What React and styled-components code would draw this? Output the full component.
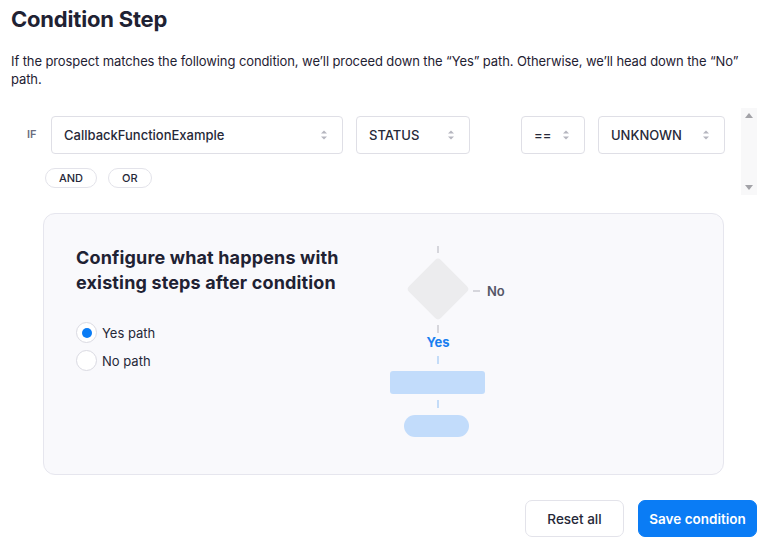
import React from 'react';
import styled, { createGlobalStyle } from 'styled-components'

const GlobalStyle = createGlobalStyle`
  body {
    margin: 0;
    background: white;
    font-family: Inter, 'Noto Sans', sans-serif;
    color: #1f2233;
  }
`

const fields = [
  { label: 'CallbackFunctionExample', width: 292, gapBefore: 0 },
  { label: 'STATUS', width: 114 },
  { label: '==', width: 64, gapBefore: 51 },
  { label: 'UNKNOWN', width: 127 },
]

const Arrows = () => (
  <svg width="8" height="12" viewBox="0 0 8 12">
    <path d="M4 1.5 L7 4.5 H1 Z" fill="#b5b6bf" />
    <path d="M4 10.5 L7 7.5 H1 Z" fill="#b5b6bf" />
  </svg>
)

const PathDiagram = () => (
  <svg width="130" height="200" viewBox="0 0 130 200">
    <g stroke="#d6d6dc" strokeWidth="2">
      <line x1="53" y1="6" x2="53" y2="13" />
      <line x1="53" y1="85" x2="53" y2="93" />
      <line x1="88" y1="51" x2="95" y2="51" />
    </g>
    <rect x="30.5" y="26.5" width="45" height="45" rx="4" fill="#ececee" transform="rotate(45 53 49)" />
    <text x="102" y="56" fontSize="13" fontWeight="600" fill="#555767" fontFamily="Inter, sans-serif">No</text>
    <text x="53" y="107" fontSize="13" fontWeight="700" fill="#1a7ff0" textAnchor="middle" fontFamily="Inter, sans-serif">Yes</text>
    <g stroke="#c4dcf8" strokeWidth="2">
      <line x1="53" y1="116" x2="53" y2="124" />
      <line x1="53" y1="160" x2="53" y2="168" />
    </g>
    <rect x="5" y="131" width="95" height="23" rx="3" fill="#c2dcfb" />
    <rect x="19" y="175" width="65" height="22" rx="11" fill="#c2dcfb" />
  </svg>
)

const App = () => {
  return (
    <Page>
      <GlobalStyle />
      <Title>Condition Step</Title>
      <Intro>
        If the prospect matches the following condition, we’ll proceed down the “Yes” path. Otherwise, we’ll head down the “No” path.
      </Intro>

      <Conditions>
        <ConditionList>
          <Row>
            <IfLabel>IF</IfLabel>
            {fields.map((f, i) => (
              <Select key={i} w={f.width} gap={f.gapBefore}>
                <span>{f.label}</span>
                <Arrows />
              </Select>
            ))}
          </Row>
          <Pills>
            <Pill>AND</Pill>
            <Pill>OR</Pill>
          </Pills>
        </ConditionList>
        <Rail>
          <RailArrow up />
          <RailArrow />
        </Rail>
      </Conditions>

      <Card>
        <Options>
          <CardTitle>Configure what happens with existing steps after condition</CardTitle>
          <Radios>
            <RadioRow>
              <Radio checked />
              Yes path
            </RadioRow>
            <RadioRow>
              <Radio />
              No path
            </RadioRow>
          </Radios>
        </Options>
        <Diagram>
          <PathDiagram />
        </Diagram>
      </Card>

      <Footer>
        <Button w={99}>Reset all</Button>
        <Button w={119} primary>Save condition</Button>
      </Footer>
    </Page>
  )
}

const Page = styled.div`
  padding: 6px 11px 0 11px;
`

const Title = styled.h1`
  margin: 0;
  font-size: 22px;
  font-weight: 700;
  line-height: 26px;
  letter-spacing: -0.2px;
`

const Intro = styled.p`
  margin: 20px 0 0 0;
  font-size: 13px;
  line-height: 18px;
  letter-spacing: -0.1px;
`

const Conditions = styled.div`
  margin-top: 20px;
  height: 87px;
  display: flex;
`

const ConditionList = styled.div`
  flex: 1;
  padding: 8px 0 0 16px;
`

const Rail = styled.div`
  width: 16px;
  background: #f8f8f9;
  display: flex;
  flex-direction: column;
  justify-content: space-between;
  align-items: center;
  padding: 5px 0;
  box-sizing: border-box;
`

const RailArrow = styled.span`
  width: 0;
  height: 0;
  border-left: 4.5px solid transparent;
  border-right: 4.5px solid transparent;
  ${(p) => (p.up ? 'border-bottom' : 'border-top')}: 5px solid #a3a3a8;
`

const Row = styled.div`
  display: flex;
  align-items: flex-start;
`

const IfLabel = styled.div`
  width: 24px;
  font-size: 11px;
  font-weight: 600;
  color: #6b6d80;
  padding-top: 11px;
`

const Select = styled.div`
  width: ${(p) => p.w}px;
  height: 38px;
  box-sizing: border-box;
  margin-left: ${(p) => (p.gap ?? 13)}px;
  border: 1px solid #dfdfe6;
  border-radius: 4px;
  display: flex;
  align-items: center;
  justify-content: space-between;
  padding: 0 14px 0 12px;
  font-size: 13px;
  font-weight: 500;
  color: #262838;
`

const Pills = styled.div`
  display: flex;
  gap: 11px;
  margin: 14px 0 0 18px;
`

const Pill = styled.div`
  height: 18px;
  padding: 0 13px;
  border: 1px solid #e3e3ea;
  border-radius: 10px;
  font-size: 11px;
  font-weight: 500;
  line-height: 18px;
  color: #262838;
`

const Card = styled.div`
  margin: 18px 0 0 32px;
  width: 681px;
  height: 262px;
  box-sizing: border-box;
  background: #f9f9fc;
  border: 1px solid #e6e6ee;
  border-radius: 12px;
  display: flex;
  padding: 26px 0 0 32px;
`

const Options = styled.div`
  width: 299px;
`

const CardTitle = styled.h2`
  margin: 5px 0 0 0;
  font-size: 18px;
  font-weight: 700;
  line-height: 25px;
  letter-spacing: 0.15px;
  color: #1f2233;
`

const Radios = styled.div`
  margin-top: 27px;
  display: flex;
  flex-direction: column;
  gap: 7px;
`

const RadioRow = styled.label`
  display: flex;
  align-items: center;
  gap: 5px;
  font-size: 13px;
  color: #262838;
`

const Radio = styled.span`
  width: 21px;
  height: 21px;
  box-sizing: border-box;
  border-radius: 50%;
  border: 1px solid #dadae2;
  background: white;
  display: flex;
  align-items: center;
  justify-content: center;
  &::after {
    content: '';
    width: 10px;
    height: 10px;
    border-radius: 50%;
    background: ${(p) => (p.checked ? '#0a7cf5' : 'transparent')};
  }
`

const Diagram = styled.div`
  margin: 0 0 0 10px;
`

const Footer = styled.div`
  display: flex;
  justify-content: flex-end;
  gap: 14px;
  margin-top: 25px;
`

const Button = styled.button`
  width: ${(p) => p.w}px;
  height: 37px;
  padding: 0;
  border-radius: 7px;
  border: 1px solid ${(p) => (p.primary ? '#0a7cf5' : '#e3e3ea')};
  background: ${(p) => (p.primary ? '#0a7cf5' : 'white')};
  color: ${(p) => (p.primary ? 'white' : '#262838')};
  font-family: Inter, sans-serif;
  font-size: 13.5px;
  font-weight: ${(p) => (p.primary ? 600 : 500)};
`

export default App
